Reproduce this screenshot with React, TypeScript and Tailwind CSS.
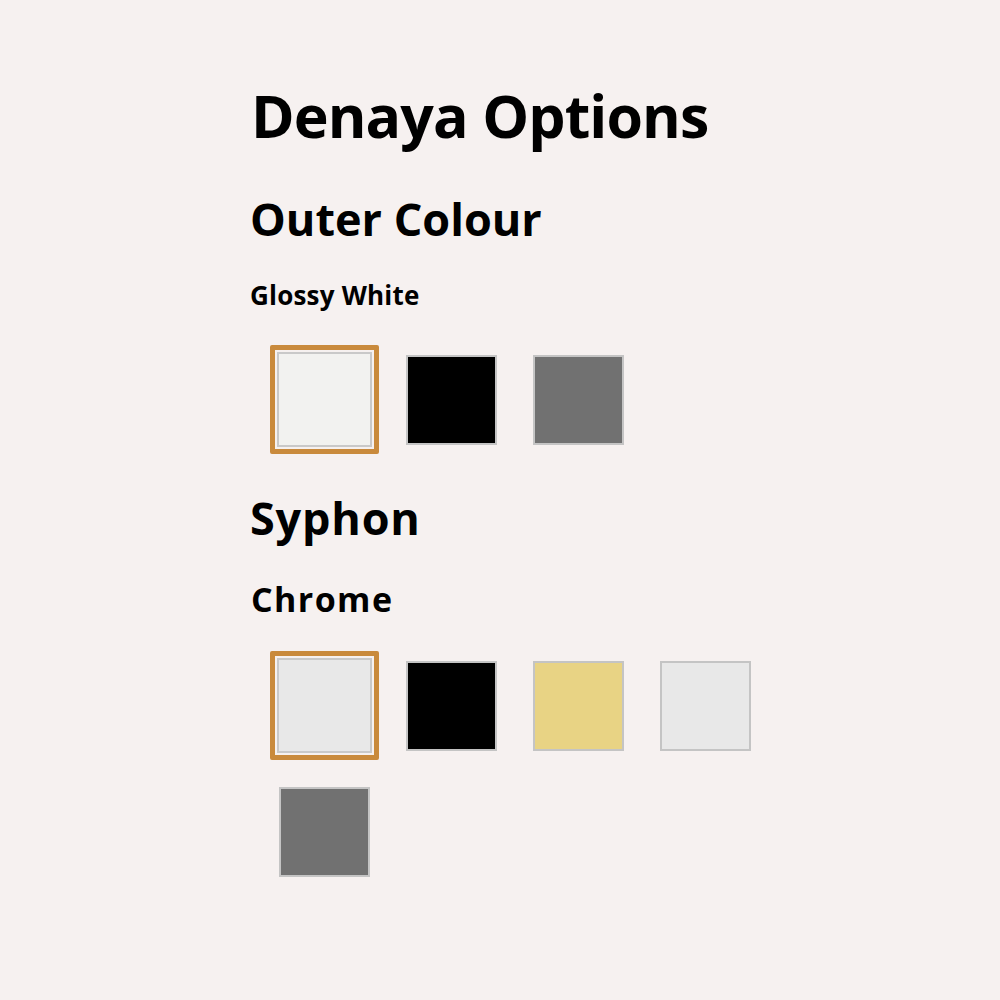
import React from "react";

type Swatch = { name: string; color: string };

const outerColours: Swatch[] = [
  { name: "Glossy White", color: "#f2f2f0" },
  { name: "Matte Black", color: "#000000" },
  { name: "Concrete Grey", color: "#717171" },
];

const syphons: Swatch[] = [
  { name: "Chrome", color: "#e8e8e8" },
  { name: "Black", color: "#000000" },
  { name: "Brushed Gold", color: "#e8d384" },
  { name: "Brushed Nickel", color: "#e8e8e8" },
  { name: "Gunmetal", color: "#717171" },
];

function SwatchTile({ swatch, selected }: { swatch: Swatch; selected: boolean }) {
  return (
    <button
      type="button"
      title={swatch.name}
      className="w-[109px] h-[109px] flex items-center justify-center"
    >
      {selected ? (
        <span className="w-[109px] h-[109px] border-[5px] border-[#c98a3c] rounded-[2px] p-[2px] flex">
          <span
            className="flex-1 border-2 border-[#c9c9c9]"
            style={{ backgroundColor: swatch.color }}
          />
        </span>
      ) : (
        <span
          className="w-[91px] h-[90px] border-2 border-[#c4c4c4]"
          style={{ backgroundColor: swatch.color }}
        />
      )}
    </button>
  );
}

function SwatchGrid({ items }: { items: Swatch[] }) {
  return (
    <div className="flex flex-wrap gap-x-[18px] gap-y-[17px] ml-[20px] w-[490px]">
      {items.map((s, i) => (
        <SwatchTile key={s.name} swatch={s} selected={i === 0} />
      ))}
    </div>
  );
}

export default function App() {
  return (
    <div
      className="w-[1000px] h-[1000px] bg-[#f6f1f0] text-black pt-[86px] pl-[250px]"
      style={{ fontFamily: '"Open Sans", "Noto Sans", sans-serif' }}
    >
      <div className="flex flex-col">
        <h1 className="text-[59px] leading-none font-bold ml-[1px] tracking-[-0.9px]">
          Denaya Options
        </h1>
        <h2 className="text-[45px] leading-none font-bold mt-[51px]">Outer Colour</h2>
        <p className="text-[26px] leading-none font-bold mt-[41px] tracking-[0.2px]">
          Glossy White
        </p>
        <div className="mt-[37px]">
          <SwatchGrid items={outerColours} />
        </div>
        <h2 className="text-[45px] leading-none font-bold mt-[41px] tracking-[0.8px]">Syphon</h2>
        <p className="text-[34px] leading-none font-bold mt-[42px] ml-[1px] tracking-[1.4px]">
          Chrome
        </p>
        <div className="mt-[35px]">
          <SwatchGrid items={syphons} />
        </div>
      </div>
    </div>
  );
}
